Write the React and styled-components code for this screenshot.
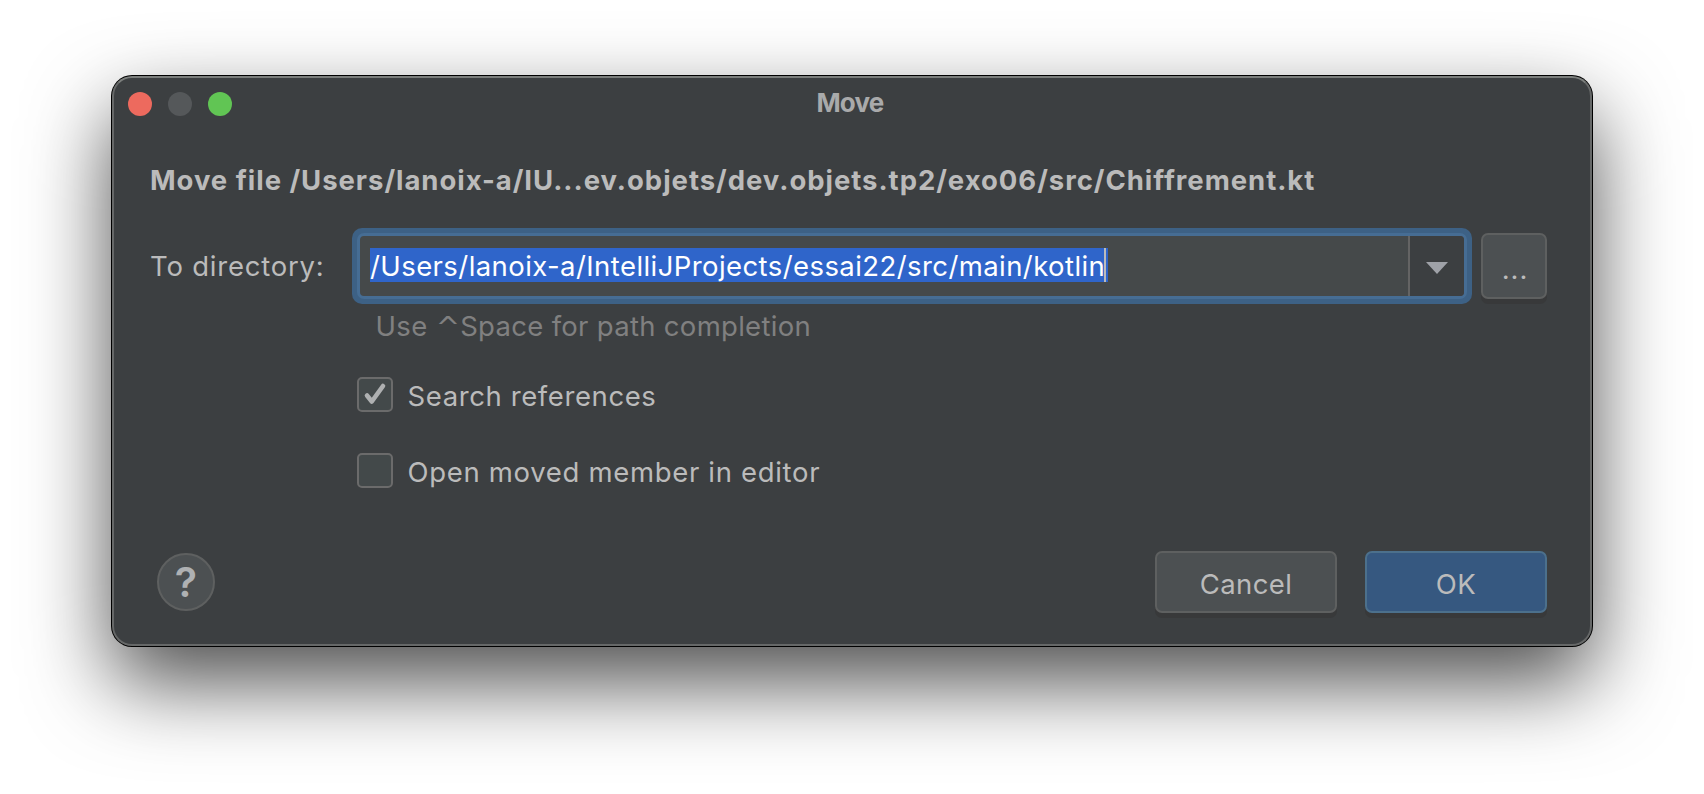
import React from "react";
import styled, { createGlobalStyle } from "styled-components";

const GlobalStyle = createGlobalStyle`
  *, *::before, *::after { box-sizing: border-box; }
  body {
    margin: 0;
    background: #fff;
    overflow: hidden;
    font-family: Inter, "Liberation Sans", sans-serif;
    font-size: 27.5px;
    line-height: 32px;
    color: #bbbbbb;
  }
  button { font: inherit; color: inherit; padding: 0; }
`;

const Desktop = styled.div`
  height: 794px;
  padding: 76px 112px 0;
`;

const Dialog = styled.main`
  width: 1480px;
  height: 570px;
  border: 2px solid #666868;
  border-top-color: #7b7e7c;
  border-radius: 20px;
  background: #3c3f41;
  box-shadow: 0 0 0 1px #000, 0 36px 84px rgba(0, 0, 0, 0.7);
  display: flex;
  flex-direction: column;
`;

const TitleBar = styled.header`
  height: 52px;
  padding: 0 14px;
  display: grid;
  grid-template-columns: 104px 1fr 104px;
  align-items: center;
`;

const Lights = styled.div`
  display: flex;
  gap: 16px;
`;

const Light = styled.span`
  width: 24px;
  height: 24px;
  border-radius: 50%;
  background: ${(p) => p.$color};
`;

const Title = styled.h1`
  margin: 0;
  padding: 0 4px 3px 0;
  text-align: center;
  font-size: 26px;
  font-weight: 700;
  letter-spacing: -0.8px;
  color: #a9aaab;
`;

const Content = styled.section`
  padding: 34px 43px 0 36px;
  display: flex;
  flex-direction: column;
`;

const Text = styled.span`
  font-weight: ${(p) => p.$weight || 400};
  letter-spacing: ${(p) => p.$track || 0}px;
  white-space: pre;
`;

const FieldRow = styled.div`
  margin-top: 32px;
  display: flex;
  align-items: center;
`;

const Label = styled.label`
  width: 202px;
  padding-bottom: 1px;
`;

const Combo = styled.div`
  width: 1120px;
  height: 76px;
  padding: 5px;
  border-radius: 10px;
  background: #3d6185;
`;

const ComboInner = styled.div`
  height: 66px;
  border: 3px solid #466d94;
  border-radius: 7px;
  background: #45494a;
  display: flex;
  align-items: stretch;
  overflow: hidden;
`;

const Input = styled.div`
  flex: 1;
  padding: 12px 0 0 10px;
`;

const Selection = styled.div`
  width: 738px;
  height: 34px;
  padding-top: 2px;
  background: #2f65ca;
  color: #fff;
  display: flex;
  position: relative;
`;

const Caret = styled.span`
  position: absolute;
  right: 2px;
  top: 0;
  width: 2px;
  height: 34px;
  background: #bbbbbb;
`;

const Arrow = styled.div`
  width: 56px;
  border-left: 2px solid #646464;
  background: #3c3f41;
  display: flex;
  align-items: center;
  justify-content: center;
  padding: 4px 0 0 0;
`;

const Button = styled.button`
  width: ${(p) => p.$w}px;
  height: ${(p) => p.$h}px;
  padding-top: 3px;
  border: 2px solid ${(p) => (p.$primary ? "#4c708c" : "#5e6060")};
  border-radius: 7px;
  background: ${(p) => (p.$primary ? "#365880" : "#4c5052")};
  box-shadow: 0 5px 0 #38393a;
  display: flex;
  align-items: center;
  justify-content: center;
`;

const Browse = styled(Button)`
  margin-left: 9px;
  padding: 6px 0 0 2px;
`;

const Hint = styled.div`
  margin-top: 6px;
  padding-left: 225.5px;
  height: 32px;
  color: #808080;
  display: flex;
  white-space: pre;
`;

const ControlSign = styled.span`
  font-family: "DejaVu Sans", sans-serif;
  font-size: 29px;
  padding-top: 1px;
`;

const Check = styled.label`
  margin: ${(p) => p.$top}px 0 0 207px;
  height: 36px;
  display: flex;
  gap: 14.5px;
`;

const Box = styled.span`
  width: 36px;
  height: 35px;
  border: 2px solid #6b6b6b;
  border-radius: 5px;
  background: #43494a;
  display: flex;
`;

const CheckText = styled(Text)`
  padding-top: 3px;
`;

const Footer = styled.footer`
  margin-top: 62px;
  padding: 0 43px;
  display: flex;
  align-items: center;
  gap: 28px;
`;

const Help = styled.button`
  width: 58px;
  height: 58px;
  margin-right: auto;
  border: 2px solid #5e6060;
  border-radius: 50%;
  background: #4c5052;
  color: #afb1b3;
  display: flex;
  align-items: center;
  justify-content: center;
  && { font-size: 41px; font-weight: 600; }
`;

export default function App() {
  return (
    <>
      <GlobalStyle />
      <Desktop>
        <Dialog>
          <TitleBar>
            <Lights>
              <Light $color="#ed6a5e" />
              <Light $color="#55585a" />
              <Light $color="#61c554" />
            </Lights>
            <Title>Move</Title>
          </TitleBar>
          <Content>
            <Text $weight={700} $track={0.96}>
              Move file /Users/lanoix-a/IU...ev.objets/dev.objets.tp2/exo06/src/Chiffrement.kt
            </Text>
            <FieldRow>
              <Label>
                <Text $track={0.78}>To directory:</Text>
              </Label>
              <Combo>
                <ComboInner>
                  <Input>
                    <Selection>
                      <Text $track={0.42}>/Users/lanoix-a/IntelliJProjects/essai22/src/main/kotlin</Text>
                      <Caret />
                    </Selection>
                  </Input>
                  <Arrow>
                    <svg width="22" height="12" viewBox="0 0 22 12">
                      <path d="M0 0H22L11 12Z" fill="#9fa2a8" />
                    </svg>
                  </Arrow>
                </ComboInner>
              </Combo>
              <Browse $w={66} $h={66}>
                <Text $track={0.9}>...</Text>
              </Browse>
            </FieldRow>
            <Hint>
              <Text $track={0.4}>{"Use "}</Text>
              <ControlSign>^</ControlSign>
              <Text $track={0.3}>Space for path completion</Text>
            </Hint>
            <Check $top={35}>
              <Box>
                <svg width="32" height="31" viewBox="0 0 32 31">
                  <path d="M8 16.5L12.8 22.5L24 7" fill="none" stroke="#aeb0b1" strokeWidth="4.6" strokeLinecap="round" strokeLinejoin="round" />
                </svg>
              </Box>
              <CheckText $track={0.6}>Search references</CheckText>
            </Check>
            <Check $top={40}>
              <Box />
              <CheckText $track={0.68}>Open moved member in editor</CheckText>
            </Check>
          </Content>
          <Footer>
            <Help>?</Help>
            <Button $w={182} $h={62}>
              <Text $track={0.4}>Cancel</Text>
            </Button>
            <Button $w={182} $h={62} $primary>
              <Text $track={0.4}>OK</Text>
            </Button>
          </Footer>
        </Dialog>
      </Desktop>
    </>
  );
}
